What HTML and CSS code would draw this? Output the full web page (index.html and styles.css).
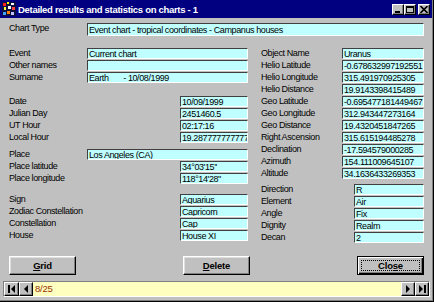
FILE: index.html
```html
<!DOCTYPE html>
<html>
<head>
<meta charset="utf-8">
<link rel="stylesheet" href="styles.css">
</head>
<body>
<div class="window">
  <div class="titlebar">
    <svg class="appicon" viewBox="0 0 14 14" width="14" height="14">
      <rect x="0" y="0" width="14" height="14" fill="#101040"/>
      <rect x="1" y="1" width="3" height="3" fill="#ff2020"/>
      <rect x="5" y="0" width="2" height="2" fill="#ffff00"/>
      <rect x="9" y="1" width="3" height="2" fill="#ffffff"/>
      <rect x="2" y="5" width="2" height="3" fill="#ffff40"/>
      <rect x="6" y="4" width="3" height="3" fill="#ffffff"/>
      <rect x="10" y="5" width="3" height="3" fill="#ff4040"/>
      <rect x="1" y="10" width="3" height="3" fill="#40a0ff"/>
      <rect x="5" y="9" width="3" height="3" fill="#ff8000"/>
      <rect x="9" y="10" width="3" height="3" fill="#c0c0ff"/>
    </svg>
    <span class="title">Detailed results and statistics on charts - 1</span>
    <div class="winbtns">
      <span class="wb"><svg viewBox="0 0 8 7" width="8" height="7"><rect x="1" y="5" width="5" height="2" fill="#000"/></svg></span>
      <span class="wb"><svg viewBox="0 0 8 7" width="8" height="7"><rect x="0.5" y="0.5" width="7" height="6" fill="none" stroke="#000"/><rect x="0" y="0" width="8" height="2" fill="#000"/></svg></span>
      <span class="wb wb-close"><svg viewBox="0 0 8 7" width="8" height="7"><path d="M0.5 0 L7.5 7 M7.5 0 L0.5 7" stroke="#000" stroke-width="1.6"/></svg></span>
    </div>
  </div>

  <div class="content">
    <div class="chartrow">
      <span class="lbl">Chart Type</span>
      <span class="fld">Event chart - tropical coordinates - Campanus houses</span>
    </div>

    <div class="cols">
      <div class="col col-left">
        <div class="grp">
          <div class="r"><span class="lbl">Event</span><span class="fld w-full">Current chart</span></div>
          <div class="r"><span class="lbl">Other names</span><span class="fld w-full"></span></div>
          <div class="r"><span class="lbl">Surname</span><span class="fld w-full">Earth       - 10/08/1999</span></div>
        </div>
        <div class="grp grp-date">
          <div class="r"><span class="lbl">Date</span><span class="fld w-short">10/09/1999</span></div>
          <div class="r"><span class="lbl">Julian Day</span><span class="fld w-short">2451460.5</span></div>
          <div class="r"><span class="lbl">UT Hour</span><span class="fld w-short">02:17:16</span></div>
          <div class="r"><span class="lbl">Local Hour</span><span class="fld w-short">19.2877777777778</span></div>
        </div>
        <div class="grp grp-place">
          <div class="r"><span class="lbl">Place</span><span class="fld w-full">Los Angeles (CA)</span></div>
          <div class="r"><span class="lbl">Place latitude</span><span class="fld w-short">34°03'15''</span></div>
          <div class="r"><span class="lbl">Place longitude</span><span class="fld w-short">118°14'28''</span></div>
        </div>
        <div class="grp grp-sign">
          <div class="r"><span class="lbl">Sign</span><span class="fld w-short">Aquarius</span></div>
          <div class="r"><span class="lbl">Zodiac Constellation</span><span class="fld w-short">Capricorn</span></div>
          <div class="r"><span class="lbl">Constellation</span><span class="fld w-short">Cap</span></div>
          <div class="r"><span class="lbl">House</span><span class="fld w-short">House XI</span></div>
        </div>
      </div>

      <div class="col col-right">
        <div class="grp">
          <div class="r"><span class="lbl">Object Name</span><span class="fld w-rwide">Uranus</span></div>
          <div class="r"><span class="lbl">Helio Latitude</span><span class="fld w-rwide">-0.678632997192551</span></div>
          <div class="r"><span class="lbl">Helio Longitude</span><span class="fld w-rwide">315.491970925305</span></div>
          <div class="r"><span class="lbl">Helio Distance</span><span class="fld w-rwide">19.9143398415489</span></div>
          <div class="r"><span class="lbl">Geo Latitude</span><span class="fld w-rwide">-0.695477181449467</span></div>
          <div class="r"><span class="lbl">Geo Longitude</span><span class="fld w-rwide">312.943447273164</span></div>
          <div class="r"><span class="lbl">Geo Distance</span><span class="fld w-rwide">19.4320451847265</span></div>
          <div class="r"><span class="lbl">Right Ascension</span><span class="fld w-rwide">315.615194485278</span></div>
          <div class="r"><span class="lbl">Declination</span><span class="fld w-rwide">-17.594579000285</span></div>
          <div class="r"><span class="lbl">Azimuth</span><span class="fld w-rwide">154.111009645107</span></div>
          <div class="r"><span class="lbl">Altitude</span><span class="fld w-rwide">34.1636433269353</span></div>
        </div>
        <div class="grp grp-dir">
          <div class="r"><span class="lbl">Direction</span><span class="fld w-rshort">R</span></div>
          <div class="r"><span class="lbl">Element</span><span class="fld w-rshort">Air</span></div>
          <div class="r"><span class="lbl">Angle</span><span class="fld w-rshort">Fix</span></div>
          <div class="r"><span class="lbl">Dignity</span><span class="fld w-rshort">Realm</span></div>
          <div class="r"><span class="lbl">Decan</span><span class="fld w-rshort">2</span></div>
        </div>
      </div>
    </div>

    <div class="buttons">
      <span class="btn"><u>G</u>rid</span>
      <span class="btn"><u>D</u>elete</span>
      <span class="btn btn-default"><span class="focus">Clo<u>s</u>e</span></span>
    </div>
  </div>

  <div class="nav">
    <span class="navbtn nb-wide"><svg viewBox="0 0 8 8" width="8" height="8"><rect x="0" y="0" width="2" height="8" fill="#000"/><path d="M7 0 L3 4 L7 8 Z" fill="#000"/></svg></span>
    <span class="navbtn"><svg viewBox="0 0 8 8" width="8" height="8"><path d="M6 0 L2 4 L6 8 Z" fill="#000"/></svg></span>
    <span class="navfield">8/25</span>
    <span class="navbtn"><svg viewBox="0 0 8 8" width="8" height="8"><path d="M2 0 L6 4 L2 8 Z" fill="#000"/></svg></span>
    <span class="navbtn"><svg viewBox="0 0 8 8" width="8" height="8"><path d="M1 0 L5 4 L1 8 Z" fill="#000"/><rect x="6" y="0" width="2" height="8" fill="#000"/></svg></span>
  </div>
</div>
</body>
</html>
```

FILE: styles.css
```css
body {
  margin: 0;
  background: #c0c0c0;
  font-family: "Liberation Sans", Arial, sans-serif;
  font-size: 9px;
  letter-spacing: -0.4px;
  color: #000;
}

.window {
  width: 434px;
  height: 302px;
  box-sizing: border-box;
  overflow: hidden;
  box-shadow: inset -1px -1px 0 #000, inset -2px -2px 0 #808080;
}

.titlebar {
  height: 18px;
  margin-right: 2px;
  background: #000080;
  color: #fff;
  display: flex;
  align-items: center;
  padding-left: 2px;
}

.appicon {
  display: block;
  margin-right: 2px;
}

.title {
  flex: 1;
  font-weight: bold;
  font-size: 9.5px;
  letter-spacing: -0.3px;
  white-space: nowrap;
}

.winbtns {
  display: flex;
  margin-right: 2px;
}

.wb {
  width: 12px;
  height: 11px;
  box-sizing: border-box;
  background: #c0c0c0;
  border: 1px solid;
  border-color: #fff #000 #000 #fff;
  box-shadow: inset -1px -1px 0 #808080;
  display: flex;
  align-items: center;
  justify-content: center;
}

.wb svg { display: block; }

.wb-close { margin-left: 2px; }

.content {
  padding: 5px 10px 0 9px;
}

.chartrow {
  display: flex;
  height: 13px;
}

.chartrow .lbl {
  width: 78px;
  line-height: 11px;
}

.chartrow .fld {
  flex: 1;
  height: 13px;
  line-height: 12px;
}

.fld {
  display: block;
  box-sizing: border-box;
  height: 11px;
  background: #c0ffff;
  border: 1px solid;
  border-color: #404040 #fff #fff #404040;
  padding: 0 1px;
  line-height: 11px;
  white-space: pre;
  overflow: hidden;
}

.cols {
  display: flex;
  gap: 13px;
  margin-top: 12px;
}

.col-left { width: 239px; }
.col-right { width: 163px; }

.r {
  display: flex;
  height: 11px;
  margin-bottom: 1px;
}

.r .lbl {
  flex: 1;
  line-height: 11px;
  white-space: nowrap;
}

.w-full { width: 161px; }
.w-short { width: 68px; }
.w-rwide { width: 82px; }
.w-rshort { width: 70px; }

.grp-date { margin-top: 13px; }
.grp-place { margin-top: 6px; }
.grp-sign { margin-top: 10px; }
.grp-dir { margin-top: 5px; }

.buttons {
  display: flex;
  justify-content: space-between;
  margin-top: 12px;
}

.btn {
  width: 67px;
  height: 19px;
  box-sizing: border-box;
  border: 1px solid;
  border-color: #fff #000 #000 #fff;
  box-shadow: inset -1px -1px 0 #808080, inset 1px 1px 0 #dfdfdf;
  display: flex;
  align-items: center;
  justify-content: center;
  font-weight: bold;
  font-size: 9.5px;
  letter-spacing: -0.2px;
}

.btn-default {
  border-color: #000;
  box-shadow: inset 1px 1px 0 #fff, inset -1px -1px 0 #000, inset -2px -2px 0 #808080;
  padding: 3px;
}

.focus {
  flex: 1;
  align-self: stretch;
  border: 1px dotted #000;
  display: flex;
  align-items: center;
  justify-content: center;
}

.nav {
  display: flex;
  height: 16px;
  box-sizing: border-box;
  margin: 6px 4px 0 3px;
  border: 1px solid;
  border-color: #808080 #fff #fff #808080;
}

.navbtn {
  width: 14px;
  box-sizing: border-box;
  background: #c0c0c0;
  border: 1px solid;
  border-color: #fff #000 #000 #fff;
  box-shadow: inset -1px -1px 0 #808080;
  display: flex;
  align-items: center;
  justify-content: center;
}

.navbtn svg { display: block; }

.nb-wide { width: 15px; }

.navfield {
  flex: 1;
  background: #ffffc0;
  color: #993300;
  padding-left: 2px;
  line-height: 14px;
  font-size: 9.5px;
  letter-spacing: -0.2px;
}
```
